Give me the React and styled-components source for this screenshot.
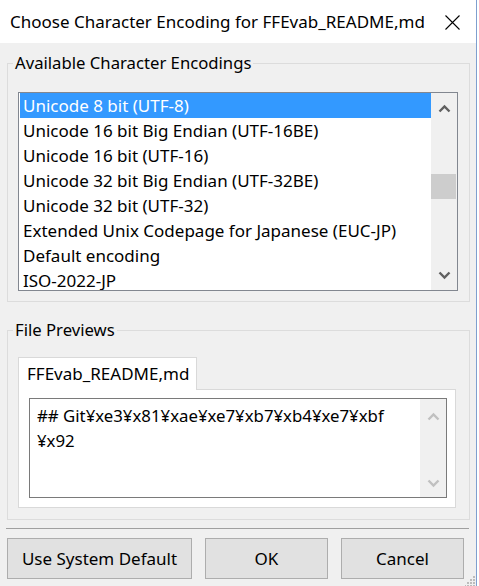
import React from 'react';
import styled, { createGlobalStyle } from 'styled-components';

const GlobalStyle = createGlobalStyle`
  html, body { margin: 0; padding: 0; background: #fff; }
  body { font-family: "Noto Sans", "Open Sans", sans-serif; color: #000; }
  * { box-sizing: border-box; }
`;

const Screen = styled.div`
  display: flex;
  width: 479px;
  height: 586px;
  overflow: hidden;
  background: #fff;
`;

const Window = styled.div`
  position: relative;
  width: 477px;
  height: 586px;
  flex-shrink: 0;
  border-right: 1px solid #7f9fcf;
  display: flex;
  flex-direction: column;
  background: #f0f0f0;
`;

const TitleBar = styled.div`
  height: 43px;
  flex-shrink: 0;
  background: #fff;
  display: flex;
  align-items: center;
  justify-content: space-between;
  padding: 0 16px 0 10px;
`;

const Title = styled.div`
  font-size: 17px;
  white-space: nowrap;
`;

const CloseButton = styled.div`
  width: 15px;
  height: 15px;
  display: flex;
  margin-top: 1px;
`;

const Body = styled.div`
  display: flex;
  flex-direction: column;
  padding: 8px 0 0 7px;
`;

const Group = styled.fieldset`
  margin: ${p => p.$top}px 0 0 0;
  width: 463px;
  min-width: 0;
  border: 1px solid #dcdcdc;
  padding: ${p => p.$pad};
`;

const Legend = styled.legend`
  font-size: 16.7px;
  line-height: 24px;
  padding: 0 2px;
  margin-left: -5px;
  white-space: nowrap;
`;

const ListBox = styled.div`
  height: 199px;
  border: 1px solid #828790;
  background: #fff;
  display: flex;
  overflow: hidden;
`;

const Items = styled.div`
  flex: 1;
  padding-left: 1px;
  overflow: hidden;
`;

const Item = styled.div`
  height: 25px;
  line-height: 25px;
  padding-left: 3px;
  font-size: 17px;
  white-space: nowrap;
  background: ${p => (p.$selected ? '#3399ff' : 'transparent')};
  color: ${p => (p.$selected ? '#fff' : '#000')};
`;

const ScrollBar = styled.div`
  width: ${p => p.$w}px;
  flex-shrink: 0;
  background: #f0f0f0;
  display: flex;
  flex-direction: column;
`;

const ScrollButton = styled.div`
  height: ${p => p.$h}px;
  flex-shrink: 0;
  display: flex;
  align-items: center;
  justify-content: center;
`;

const Track = styled.div`
  flex: 1;
  display: flex;
  flex-direction: column;
`;

const Thumb = styled.div`
  height: 25px;
  margin-right: 1px;
  background: #cdcdcd;
`;

const TabStrip = styled.div`
  display: flex;
`;

const Tab = styled.div`
  position: relative;
  height: 33px;
  margin-bottom: -1px;
  padding: 0 7px 0 8px;
  border: 1px solid #d9d9d9;
  border-bottom: none;
  background: #fff;
  font-size: 17px;
  line-height: 32px;
  white-space: nowrap;
`;

const TabPanel = styled.div`
  height: 119px;
  border: 1px solid #d9d9d9;
  background: #fff;
  padding: 8px 8px 9px 10px;
`;

const TextBox = styled.div`
  height: 100px;
  border: 1px solid #7a7a7a;
  display: flex;
  background: #fff;
`;

const TextContent = styled.div`
  flex: 1;
  padding: 4px 0 0 7px;
  font-size: 16.8px;
  line-height: 25px;
  white-space: nowrap;
  overflow: hidden;
`;

const Separator = styled.div`
  height: 1px;
  margin: 8px 7px 0 -1px;
  background: #a0a0a0;
`;

const ButtonRow = styled.div`
  display: flex;
  gap: 13px;
  margin-top: 9px;
`;

const Button = styled.div`
  width: ${p => p.$w}px;
  height: 41px;
  border: 1px solid #adadad;
  background: #e1e1e1;
  display: flex;
  align-items: center;
  justify-content: center;
  font-size: 17px;
  white-space: nowrap;
`;

const Grip = styled.svg`
  position: absolute;
  right: 1px;
  bottom: 0;
`;

const Chevron = ({ dir, color }) => (
  <svg width="13" height="9" viewBox="0 0 13 9">
    <polyline
      points={dir === 'up' ? '1.5,7.5 6.5,2.5 11.5,7.5' : '1.5,1.5 6.5,6.5 11.5,1.5'}
      fill="none"
      stroke={color}
      strokeWidth="2.4"
    />
  </svg>
);

const encodings = [
  'Unicode 8 bit (UTF-8)',
  'Unicode 16 bit Big Endian (UTF-16BE)',
  'Unicode 16 bit (UTF-16)',
  'Unicode 32 bit Big Endian (UTF-32BE)',
  'Unicode 32 bit (UTF-32)',
  'Extended Unix Codepage for Japanese (EUC-JP)',
  'Default encoding',
  'ISO-2022-JP',
];

export default function App() {
  return (
    <>
      <GlobalStyle />
      <Screen>
        <Window>
          <TitleBar>
            <Title>Choose Character Encoding for FFEvab_README,md</Title>
            <CloseButton>
              <svg width="15" height="15" viewBox="0 0 15 15">
                <path d="M0.5 0.5 L14.5 14.5 M14.5 0.5 L0.5 14.5" stroke="#000" strokeWidth="1.1" />
              </svg>
            </CloseButton>
          </TitleBar>
          <Body>
            <Group $top={0} $pad="17px 11px 10px 10px">
              <Legend>Available Character Encodings</Legend>
              <ListBox>
                <Items>
                  {encodings.map((e, i) => (
                    <Item key={e} $selected={i === 0}>{e}</Item>
                  ))}
                </Items>
                <ScrollBar $w={26}>
                  <ScrollButton $h={30}><Chevron dir="up" color="#606060" /></ScrollButton>
                  <Track>
                    <Thumb style={{ marginTop: 51 }} />
                  </Track>
                  <ScrollButton $h={30}><Chevron dir="down" color="#606060" /></ScrollButton>
                </ScrollBar>
              </ListBox>
            </Group>
            <Group $top={16} $pad="15px 13px 11px 10px">
              <Legend>File Previews</Legend>
              <TabStrip>
                <Tab>FFEvab_README,md</Tab>
              </TabStrip>
              <TabPanel>
                <TextBox>
                  <TextContent>
                    ## Git¥xe3¥x81¥xae¥xe7¥xb7¥xb4¥xe7¥xbf
                    <br />
                    ¥x92
                  </TextContent>
                  <ScrollBar $w={26}>
                    <ScrollButton $h={34}><Chevron dir="up" color="#c0c0c0" /></ScrollButton>
                    <Track />
                    <ScrollButton $h={28}><Chevron dir="down" color="#c0c0c0" /></ScrollButton>
                  </ScrollBar>
                </TextBox>
              </TabPanel>
            </Group>
            <Separator />
            <ButtonRow>
              <Button $w={185}>Use System Default</Button>
              <Button $w={123}>OK</Button>
              <Button $w={123}>Cancel</Button>
            </ButtonRow>
          </Body>
          <Grip width="10" height="11" viewBox="0 0 10 11">
            {[[8, 1], [5, 4], [8, 4], [2, 7], [5, 7], [8, 7], [-1, 10], [2, 10], [5, 10], [8, 10]].map(([x, y]) => (
              <rect key={`${x}-${y}`} x={x} y={y} width="2" height="2" fill="#bcbcbc" />
            ))}
          </Grip>
        </Window>
      </Screen>
    </>
  );
}
